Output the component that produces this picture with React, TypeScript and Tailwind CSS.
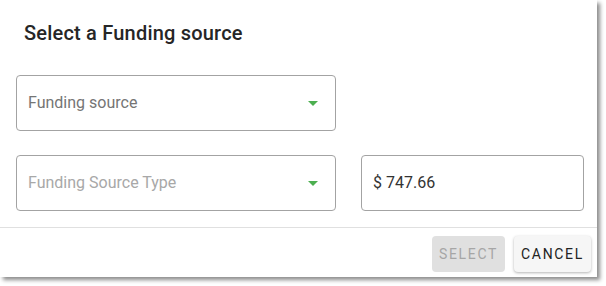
import React from "react";

/* -----------------------------
   Small dropdown arrow
----------------------------- */
const Arrow = () => (
  <svg width="10" height="5" viewBox="0 0 10 5" className="shrink-0">
    <path d="M0 0h10L5 5z" fill="#4caf50" />
  </svg>
);

const SelectField = ({ label, tone }: { label: string; tone: string }) => (
  <div className="flex h-[56px] w-[320px] items-center justify-between rounded-[4px] border border-[#a3a3a3] pl-[11px] pr-[17px]">
    <span className={`text-[16px] ${tone}`}>{label}</span>
    <Arrow />
  </div>
);

export default function App() {
  return (
    <div className="h-[286px] w-[606px] bg-white" style={{ fontFamily: "Roboto, 'Liberation Sans', sans-serif" }}>
      <div className="flex h-[277px] w-[597px] flex-col bg-white shadow-[3px_3px_4px_rgba(0,0,0,0.45)]">
        {/* Title */}
        <h2 className="pl-6 pt-[21px] text-[20px] font-medium leading-[24px] tracking-[0.01em] text-[#262626]">
          Select a Funding source
        </h2>

        {/* Fields */}
        <div className="flex flex-col gap-6 pl-4 pt-[30px]">
          <SelectField label="Funding source" tone="text-[#757575]" />
          <div className="flex gap-[25px]">
            <SelectField label="Funding Source Type" tone="text-[#a8a8a8]" />
            <div className="flex h-[56px] w-[223px] items-center rounded-[4px] border border-[#a3a3a3] pl-[11px]">
              <span className="text-[16px] text-[#333]">$ 747.66</span>
            </div>
          </div>
        </div>

        {/* Actions */}
        <div className="mt-4 border-t border-[#e0e0e0]" />
        <div className="flex justify-end gap-[9px] pr-[6px] pt-2">
          <button
            disabled
            className="h-[36px] w-[73px] rounded-[4px] bg-[#e0e0e0] text-[14px] font-normal tracking-[0.12em] text-[#a6a6a6]"
          >
            SELECT
          </button>
          <button className="h-[36px] w-[77px] rounded-[4px] bg-[#f6f6f6] text-[14px] font-normal tracking-[0.12em] text-[#222] shadow-[0_1px_3px_rgba(0,0,0,0.3)]">
            CANCEL
          </button>
        </div>
      </div>
    </div>
  );
}
